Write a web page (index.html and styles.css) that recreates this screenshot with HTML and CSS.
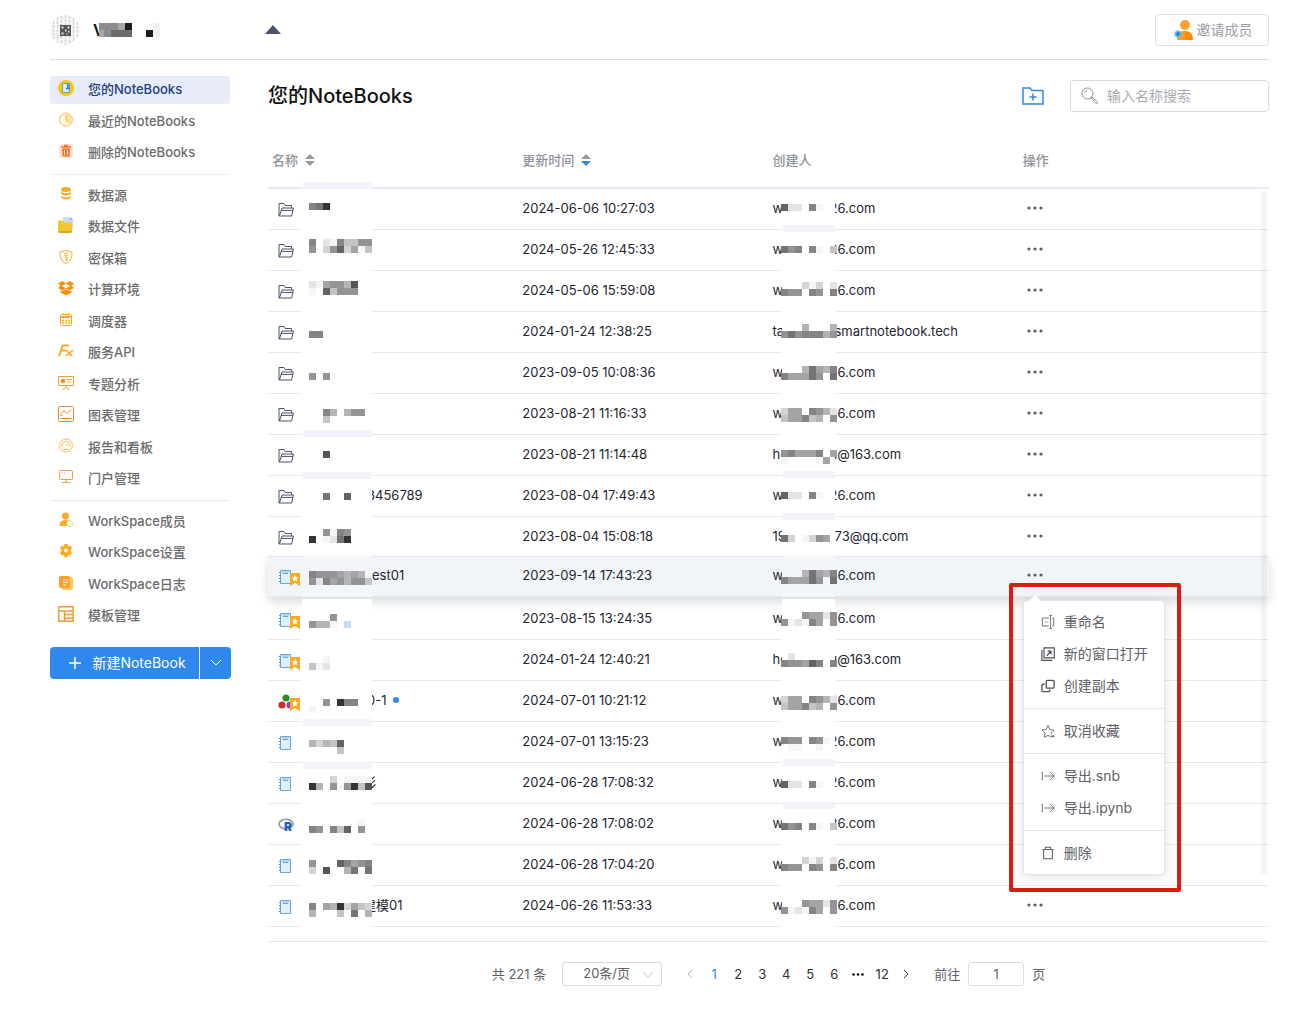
FILE: index.html
```html
<!DOCTYPE html>
<html lang="zh-CN">
<head>
<meta charset="utf-8">
<meta name="viewport" content="width=device-width, initial-scale=1">
<title>您的NoteBooks</title>
<link rel="stylesheet" href="styles.css">
</head>
<body>
<svg class="sprite" aria-hidden="true">
  <symbol id="i-folder" viewBox="0 0 16 16"><path d="M1 14V1.500h5l1.200 2h6.300v2.300M1 14h12.600l1.800-8H4L1.400 14M3 8.400h12" fill="none" stroke="#4b536a" stroke-linejoin="round"/></symbol>
  <symbol id="i-book" viewBox="0 0 16 16"><path d="M2.500 1.500h10v13h-10z" fill="#dcf0ff" stroke="#6ba6d8"/><path d="M4 2h7v2.500H4z" fill="#b3d5f3"/><path d="M5 4.500h5" stroke="#6ba6d8"/><path d="M1 3.500h2M1 6.500h2M1 9.500h2M1 12.500h2" stroke="#4f94cf"/></symbol>
  <symbol id="i-julia" viewBox="0 0 16 16"><circle cx="8" cy="4" r="3.600" fill="#2f8f22"/><circle cx="4" cy="11" r="3.600" fill="#cb3030"/><circle cx="12" cy="11" r="3.600" fill="#8a4bb5"/></symbol>
  <symbol id="i-r" viewBox="0 0 16 16"><ellipse cx="8" cy="7" rx="7" ry="4.800" fill="none" stroke="#a3a7ad" stroke-width="2"/><text x="6" y="14" font-family="Inter, sans-serif" font-weight="900" font-size="12" fill="#1e5fbf">R</text></symbol>
  <symbol id="i-mark" viewBox="0 0 10 13"><path d="M0 0h10v13l-5-3-5 3z" fill="#fbab22"/><path d="M5 2l1 2.200 2.400.2-1.800 1.600.6 2.400L5 7.200 2.800 8.400l.6-2.400L1.600 4.400 4 4.200z" fill="#fff"/></symbol>
  <symbol id="i-dots" viewBox="0 0 16 4"><circle cx="2" cy="2" r="1.600"/><circle cx="8" cy="2" r="1.600"/><circle cx="14" cy="2" r="1.600"/></symbol>
  <symbol id="i-sort" viewBox="0 0 10 12"><path d="M5 0l5 5H0z" fill="#989ba6"/><path d="M5 12L0 7h10z" fill="currentColor"/></symbol>
  <symbol id="i-export" viewBox="0 0 16 16"><path d="M1.500 3v10M3.500 8H15M10.500 3.500L15 8l-4.500 4.500" fill="none" stroke="#5d6066"/></symbol>
</svg>

<header class="topbar">
  <div class="workspace">
    <svg class="avatar" viewBox="0 0 30 30" aria-hidden="true">
      <circle cx="15" cy="15" r="15" fill="#f8f8f8"/>
      <path d="M3.500 6v18M7.500 2v26M11.500 1v28M15.500 0v30M19.500 1v28M23.500 3v24M27.500 7v16" stroke="#d6d6d6" stroke-width="1.500" stroke-dasharray="3 1"/>
      <path d="M10 10h11v11H10z" fill="#555"/>
      <path d="M11.500 11.500h2v2h-2zM17.500 11.500h2v2h-2zM11.500 17.500h2v2h-2zM15 14.500h1.500v2H15zM18 16h1.500v1.500H18zM16 18.500h1.500v1H16z" fill="#e5e5e5"/>
    </svg>
    <span class="ws-name">V</span>
    <svg class="ws-mosaic" viewBox="0 0 62 14" aria-hidden="true"><path fill="#8c8c8c" d="M0 0h26v14H0z"/><path fill="#a6a6a6" d="M19 0h7v7h-7zM0 7h5v7H0z"/><path fill="#6b6b6b" d="M12 7h21v7H12z"/><path fill="#1d1d1d" d="M26 0h7v7h-7zM47 7h7v7h-7z"/><path fill="#f1f1f1" d="M54 0h7v14h-7z"/></svg>
    <button class="ws-toggle" type="button" aria-label="切换工作空间"><svg viewBox="0 0 16 10"><path d="M8 0l8 9H0z" fill="#4a5268"/></svg></button>
  </div>
  <button class="invite" type="button">
    <svg viewBox="0 0 20 22" aria-hidden="true"><circle cx="11" cy="6" r="5" fill="#ffa033"/><path d="M3 21c0-6 3-9 8-9s8 3 8 9z" fill="#ff8a05"/><path d="M3 21c0-6 3-9 8-9v9z" fill="#ff9d2b"/><circle cx="4" cy="15" r="3.500" fill="#59bbe8"/><path d="M4 13v4M2 15h4" stroke="#1b6fa5"/></svg>邀请成员
  </button>
</header>

<div class="layout">
  <nav class="sidebar" aria-label="工作空间">
    <ul class="menu-group menu-group-3">
      <li><a class="nav-item active" href="#mine"><svg viewBox="0 0 16 16"><circle cx="8" cy="8" r="8" fill="#f8c60b"/><path d="M4.500 3.500h7v9h-7z" fill="#dff0ff" stroke="#5ba3da"/><path d="M8 8.500h4M10 4v5" stroke="#2a78bd" stroke-width="1.500"/></svg>您的NoteBooks</a></li>
      <li><a class="nav-item" href="#recent"><svg viewBox="0 0 16 16"><circle cx="8" cy="7.500" r="6.500" fill="#fff6df" stroke="#fbc04c"/><path d="M8 1a6.500 6.500 0 0 1 4 11L8 7.500z" fill="#fde3a8"/><path d="M8 3v5l3 3" fill="none" stroke="#fbb52f"/></svg>最近的NoteBooks</a></li>
      <li><a class="nav-item" href="#trash"><svg viewBox="0 0 16 16"><rect x="1" y="1" width="14" height="14" rx="2" fill="#fde3d4"/><path d="M3 4h10M6 2.500h4" stroke="#f0752b" stroke-width="1.500"/><path d="M4 5.500h8l-.5 8h-7z" fill="#f0752b"/><path d="M6.500 7v5M9.500 7v5" stroke="#fde3d4"/></svg>删除的NoteBooks</a></li>
    </ul>
    <ul class="menu-group menu-group-10">
      <li><a class="nav-item" href="#source"><svg viewBox="0 0 16 16" fill="#fbab22"><ellipse cx="8" cy="3.500" rx="5" ry="2.500"/><path d="M3 5.500c1 2.400 9 2.400 10 0v2c-1 2.600-9 2.600-10 0zM3 9.500c1 2.400 9 2.400 10 0v1.500c-1 3-9 3-10 0z"/></svg>数据源</a></li>
      <li><a class="nav-item" href="#files"><svg viewBox="0 0 16 16"><path d="M5 0h7l3 3v9H5z" fill="#c4dcfb"/><path d="M12 0v3h3z" fill="#7fb0f3"/><path d="M0 3.500h5l1.500 2H14V14a2 2 0 0 1-2 2H2a2 2 0 0 1-2-2z" fill="#efc92d"/><path d="M0 14a2 2 0 0 0 2 2h10a2 2 0 0 0 2-2z" fill="#e0a52c"/></svg>数据文件</a></li>
      <li><a class="nav-item" href="#vault"><svg viewBox="0 0 16 16" fill="none" stroke="#fbab22"><path d="M8 1c2 1.500 4 1.700 6 1.700C14 8 13.500 12 8 14.500 2.500 12 2 8 2 2.700 4 2.700 6 2.500 8 1z"/><circle cx="8" cy="5.500" r="1.500"/><path d="M8 7v5M8 9h2M8 11h2"/></svg>密保箱</a></li>
      <li><a class="nav-item" href="#env"><svg viewBox="0 0 16 16" fill="#ff8a05"><path d="M4.500 1L8 3.500 11.500 1 16 3.500l-2.500 2.300L16 8l-4.500 2.500L8 8.500l-3.500 2L0 8l2.500-2.200L0 3.500z"/><path d="M8 3.800l4.500 2.200L8 8.200 3.500 6z" fill="#fff"/><path d="M2.500 10.500l2 .8L8 9.300l3.500 2 2-.8v2L8 15.500l-5.500-3z"/></svg>计算环境</a></li>
      <li><a class="nav-item" href="#scheduler"><svg viewBox="0 0 16 16" fill="none" stroke="#fbab22"><rect x="2.500" y="2.500" width="11" height="11" rx="1"/><path d="M3 5h10" stroke-width="2"/><path d="M5 1v2M11 1v2"/><path d="M4 8.500h8M4 11h8" stroke-width="1.500" stroke-dasharray="2 1"/></svg>调度器</a></li>
      <li><a class="nav-item" href="#api"><svg viewBox="0 0 16 16" fill="none" stroke="#fbab22" stroke-width="2"><path d="M1 13.500L4.500 2.500H11M2.500 7.500h6"/><path d="M8 7.500c3 0 2 5 6.500 5M15.500 7.500c-4 0-4 5-8.500 5" stroke-width="1.500"/></svg>服务API</a></li>
      <li><a class="nav-item" href="#topics"><svg viewBox="0 0 16 16" fill="none" stroke="#ee9c3f"><path d="M.5 1.500h15v9H.5z"/><circle cx="5" cy="6" r="2" fill="#ee8a2a"/><path d="M9 4.500h5M9 7h4M8 10.500v2M4.500 14.500l3.500-2 3.500 2"/></svg>专题分析</a></li>
      <li><a class="nav-item" href="#charts"><svg viewBox="0 0 16 16" fill="none" stroke="#e58a2b"><rect x=".5" y=".5" width="15" height="15" rx="1"/><path d="M2.500 8.500l3.500-4 3 3 4-4M2.500 9.500h2M2.500 12.500h11"/></svg>图表管理</a></li>
      <li><a class="nav-item" href="#reports"><svg viewBox="0 0 16 16" fill="none" stroke="#fbbf5a"><circle cx="8" cy="7.500" r="6.500"/><path d="M4 9a4.200 4.200 0 1 1 8 0M8 8.500l2.500-3M5 11.500h6"/></svg>报告和看板</a></li>
      <li><a class="nav-item" href="#portal"><svg viewBox="0 0 16 16" fill="none" stroke="#ee9c3f"><rect x="1.500" y="1.500" width="13" height="9" rx="1"/><path d="M3.500 4h1M6 4h1M8 10.500v3M4 13.500h8"/></svg>门户管理</a></li>
    </ul>
    <ul class="menu-group menu-group-4">
      <li><a class="nav-item" href="#members"><svg viewBox="0 0 16 16"><circle cx="7.500" cy="4" r="3.500" fill="#fbab22"/><path d="M1.500 14c0-4 2-6 6-6l5 1-3 5z" fill="#fbab22"/><circle cx="11.500" cy="11.500" r="3" fill="#fff" stroke="#fbab22" stroke-dasharray="2 1"/></svg>WorkSpace成员</a></li>
      <li><a class="nav-item" href="#settings"><svg viewBox="0 0 16 16"><path d="M6.500 1h3l.6 2.300 2.300-.7 1.600 2.700L12.500 7v1l1.500 1.800-1.600 2.700-2.300-.6-.6 2.300h-3l-.6-2.300-2.300.6L2 9.800 3.500 8V7L2 5.300l1.600-2.700 2.300.7z" fill="#fbab22"/><circle cx="8" cy="7.500" r="2" fill="#fff"/></svg>WorkSpace设置</a></li>
      <li><a class="nav-item" href="#logs"><svg viewBox="0 0 16 16"><rect x="4" y="2" width="11" height="13" rx="2" fill="#fdc95f"/><rect x="1" y="1" width="11" height="12" rx="2" fill="#fb9f27"/><path d="M5 5h6M5 7.500h5M5 10h3" stroke="#fff"/></svg>WorkSpace日志</a></li>
      <li><a class="nav-item" href="#templates"><svg viewBox="0 0 16 16" fill="none" stroke="#f09b39" stroke-width="1.500"><path d="M.8.8h14.400v14.400H.8zM1 5h14M6.500 5v10M6.500 8.500H15M6.500 12H15"/></svg>模板管理</a></li>
    </ul>
    <div class="create">
      <button class="create-main" type="button"><svg viewBox="0 0 12 12" aria-hidden="true"><path d="M6 0v12M0 6h12" stroke="#fff" stroke-width="1.500"/></svg>新建NoteBook</button>
      <button class="create-more" type="button" aria-label="更多"><svg viewBox="0 0 10 6"><path d="M0 0l5 5 5-5" fill="none" stroke="#fff"/></svg></button>
    </div>
  </nav>

  <main class="content">
    <div class="title-row">
      <h1>您的NoteBooks</h1>
      <button class="new-folder" type="button" aria-label="新建文件夹"><svg viewBox="0 0 22 18"><path d="M1 17V1h7l2 2.500h11V17zM11 6.500v7M7.500 10h7" fill="none" stroke="#2d87ee" stroke-width="1.500"/></svg></button>
      <label class="search">
        <svg viewBox="0 0 18 18" aria-hidden="true" fill="none" stroke="#8f9399"><circle cx="6.500" cy="6.500" r="5.500"/><path d="M3.500 6a3 3 0 0 1 2.500-2.500M10 11l1-1 6 5.500-1.500 1.500z"/></svg>
        <input type="search" placeholder="输入名称搜索" aria-label="输入名称搜索">
      </label>
    </div>

    <div class="table-wrap">
      <table class="files">
        <thead>
          <tr>
            <th scope="col"><button type="button">名称<svg class="sort"><use href="#i-sort"/></svg></button></th>
            <th scope="col"><button type="button">更新时间<svg class="sort desc"><use href="#i-sort"/></svg></button></th>
            <th scope="col">创建人</th>
            <th scope="col">操作</th>
          </tr>
        </thead>
        <tbody id="rows"></tbody>
      </table>
      <div class="scrollbar"></div>
      <div class="callout">
        <div class="dropdown" role="menu">
          <button role="menuitem" type="button"><svg viewBox="0 0 16 16" fill="none" stroke="#5d6066"><path d="M9 3.500H1.500v9H9M13 3.500h1.500v9H13M11 1v14M9.500.5h3M9.500 15.500h3"/><path d="M4 8h4" stroke="#a8abb0"/></svg>重命名</button>
          <button role="menuitem" type="button"><svg viewBox="0 0 16 16" fill="none" stroke="#4c4f55" stroke-width="1.300"><path d="M3.500 1h11.700v11.500H3.500zM1 3v12.300h12M6.500 10l4.500-4.500"/><path d="M7 4h5v5z" fill="#4c4f55" stroke="none"/></svg>新的窗口打开</button>
          <button role="menuitem" type="button"><svg viewBox="0 0 16 16" fill="none" stroke="#4c4f55" stroke-width="1.500"><rect x="6" y="1.500" width="9" height="9" rx="1.500"/><path d="M4 6H2.500A1.500 1.500 0 0 0 1 7.500V13a1.500 1.500 0 0 0 1.500 1.500h6A1.500 1.500 0 0 0 10 13v-1"/></svg>创建副本</button>
          <hr>
          <button role="menuitem" type="button"><svg viewBox="0 0 16 16" fill="none" stroke="#5d6066"><path d="M12 15l-4-2-4.200 2.200.8-4.700L1 7l4.800-.7L8 1.500l2.200 4.800L15 7l-3.500 3.500.2 1.500"/><path d="M12 13h3v2h-3z" fill="#5d6066" stroke="none"/></svg>取消收藏</button>
          <hr>
          <button role="menuitem" type="button"><svg><use href="#i-export"/></svg>导出.snb</button>
          <button role="menuitem" type="button"><svg><use href="#i-export"/></svg>导出.ipynb</button>
          <hr>
          <button role="menuitem" type="button"><svg viewBox="0 0 16 16" fill="none" stroke="#5d6066" stroke-width="1.200"><path d="M1.500 4h13M5 4V1.500h6V4M3 4v10.500h10V4"/></svg>删除</button>
        </div>
      </div>
    </div>

    <nav class="pager" aria-label="分页">
      <span class="total">共 221 条</span>
      <span class="size"><select aria-label="每页条数"><option>20条/页</option></select><svg viewBox="0 0 10 6" aria-hidden="true"><path d="M0 0l5 5 5-5" fill="none" stroke="#c0c4cc"/></svg></span>
      <div class="pages">
        <button type="button" aria-label="上一页"><svg viewBox="0 0 6 10"><path d="M5 1L1 5l4 4" fill="none" stroke="#b4b8c0"/></svg></button>
        <button class="current" type="button">1</button><button type="button">2</button><button type="button">3</button><button type="button">4</button><button type="button">5</button><button type="button">6</button>
        <button type="button" aria-label="更多页"><svg class="more-pages"><use href="#i-dots"/></svg></button>
        <button type="button">12</button>
        <button type="button" aria-label="下一页"><svg viewBox="0 0 6 10"><path d="M1 1l4 4-4 4" fill="none" stroke="#303133"/></svg></button>
      </div>
      <label class="jump">前往<input type="text" value="1">页</label>
    </nav>
  </main>
</div>
<script src="rows.js"></script>
</body>
</html>
```
FILE: styles.css
```css
* { box-sizing: border-box; }

body {
  margin: 0;
  padding: 0 47px 40px 50px;
  background: #fff;
  color: #23262f;
  font: 13px/20px Inter, "Noto Sans CJK SC", sans-serif;
}

button, input, select { font: inherit; color: inherit; }
button { padding: 0; border: 0; background: none; cursor: pointer; }
svg { flex: none; display: block; }
.sprite { display: none; }

/* top bar */
.topbar {
  display: flex;
  align-items: center;
  justify-content: space-between;
  height: 60px;
  border-bottom: 1px solid #dfe0e4;
}
.workspace { display: flex; align-items: center; }
.avatar { width: 30px; height: 30px; margin-right: 13px; border-radius: 50%; }
.ws-name { width: 6px; font-size: 16px; font-weight: 600; color: #111; }
.ws-mosaic { position: relative; width: 62px; height: 14px; }
.ws-toggle { margin-left: 104px; }
.ws-toggle svg { width: 16px; height: 10px; }
.invite {
  display: flex;
  align-items: center;
  justify-content: center;
  gap: 3px;
  width: 114px;
  height: 32px;
  padding-left: 2px;
  border: 1px solid #dcdde8;
  border-radius: 4px;
  font-size: 14px;
  color: #9a9da3;
}
.invite svg { width: 20px; height: 22px; }

.layout { display: flex; gap: 38px; }

/* sidebar */
.sidebar { flex: none; width: 180px; padding-top: 16px; }
.menu-group {
  display: grid;
  align-content: space-between;
  margin: 0;
  padding: 0;
  list-style: none;
}
.menu-group-3 { height: 91px; }
.menu-group-10 { height: 311px; }
.menu-group-4 { height: 122px; }
.menu-group + .menu-group {
  box-sizing: content-box;
  margin-top: 7px;
  padding-top: 7px;
  border-top: 1px solid #ececef;
}
.menu-group-4 { margin-bottom: 17px; }
.nav-item {
  display: flex;
  align-items: center;
  gap: 14px;
  height: 28px;
  padding: 0 0 2px 8px;
  border-radius: 4px;
  color: #6b6b6b;
  font-weight: 500;
  text-decoration: none;
}
.nav-item svg { width: 16px; height: 16px; margin-bottom: 2px; }
.nav-item.active { background: #e8ecfa; color: #20407f; }
.create { display: flex; gap: 1px; width: 181px; height: 32px; }
.create button {
  display: flex;
  align-items: center;
  justify-content: center;
  background: #2f88ee;
  color: #fff;
  font-size: 14px;
}
.create-main { flex: 1; gap: 11px; border-radius: 4px 0 0 4px; padding-left: 6px; }
.create-main svg { width: 12px; height: 12px; }
.create .create-more { width: 31px; border-radius: 0 4px 4px 0; }
.create-more svg { width: 10px; height: 6px; }

/* page title */
.content { flex: 1; min-width: 0; padding-top: 20px; }
.title-row { display: flex; align-items: center; height: 32px; margin-bottom: 20px; }
h1 { flex: 1; margin: 0; font-size: 20px; line-height: 32px; font-weight: 500; color: #111; }
.new-folder { margin-right: 26px; }
.new-folder svg { width: 22px; height: 18px; }
.search {
  display: flex;
  align-items: center;
  gap: 8px;
  width: 199px;
  height: 32px;
  padding: 0 10px;
  border: 1px solid #d6d8e4;
  border-radius: 4px;
}
.search svg { width: 18px; height: 18px; }
.search input {
  flex: 1;
  min-width: 0;
  padding: 0;
  border: 0;
  outline: 0;
  background: none;
  font-size: 14px;
}
.search input::placeholder { color: #a8abb2; opacity: 1; }

/* file table */
.table-wrap { position: relative; padding-bottom: 14px; border-bottom: 1px solid #e4e6ec; }
.files { width: 100%; table-layout: fixed; border-collapse: separate; border-spacing: 0; }
th {
  height: 57px;
  padding: 0 4px;
  border-bottom: 2px solid #e6e9f3;
  text-align: left;
  font-weight: 500;
  color: #909399;
}
th button { display: flex; align-items: center; gap: 7px; }
.sort { width: 10px; height: 12px; color: #989ba6; }
.sort.desc { color: #2f88ee; }
td {
  height: 41px;
  padding: 0 4px;
  box-shadow: inset 0 -1px #e6e8f2;
  line-height: 38px;
  vertical-align: top;
  white-space: nowrap;
}
.name-cell, .owner-cell { display: flex; align-items: flex-start; height: 41px; }
.name-cell { padding-left: 6px; }
.icon { position: relative; flex: none; width: 16px; height: 16px; margin: 13px 8px 0 0; }
.icon svg { width: 16px; height: 16px; }
.icon .mark { position: absolute; left: 12px; top: 4px; width: 10px; height: 13px; }
.redact { position: relative; height: 41px; background: #fff; overflow: visible; }
.name-cell .redact { width: 70px; }
.owner-cell .redact { width: 53px; }
.tail-cut { margin-left: -5px; }
.tail-half { margin-left: -9px; }
.lead { flex: none; width: 9px; }
.unsaved { width: 6px; height: 6px; margin: 16px 0 0 7px; border-radius: 50%; background: #2f88ee; }
.more { display: flex; align-items: center; height: 38px; margin-left: 4px; }
.more svg { width: 16px; height: 4px; fill: #5a5d63; }
.raised { position: relative; transform: translateY(-2px); box-shadow: 0 5px 10px rgba(0, 0, 0, .14); }
.raised td { background: #f1f5f8; box-shadow: inset 0 1px #e4e8ef, inset 0 -1px #e4e8f2; }
.raised .redact { background: #f3f6f9; }
.scrollbar {
  position: absolute;
  top: 59px;
  right: 2px;
  width: 6px;
  height: 683px;
  border-radius: 3px;
  background: rgba(144, 147, 170, .1);
}

/* row menu with its highlight frame */
.callout {
  position: absolute;
  top: 451px;
  left: calc(75% - 10px);
  padding: 13px 12px 13px 10px;
  border: 4px solid #dc1c10;
  border-radius: 2px;
}
.dropdown {
  position: relative;
  width: 142px;
  padding: 5px 0;
  border: 1px solid #e2e5ef;
  border-radius: 4px;
  background: #fff;
  box-shadow: 0 2px 12px rgba(0, 0, 0, .12);
}
.dropdown::before {
  content: "";
  position: absolute;
  top: -6px;
  left: 5px;
  border: 6px solid transparent;
  border-top: 0;
  border-bottom-color: #fff;
}
.dropdown button {
  display: flex;
  align-items: center;
  gap: 8px;
  width: 100%;
  height: 32px;
  padding-left: 16px;
  font-size: 14px;
  color: #5d6066;
}
.dropdown svg { width: 16px; height: 16px; padding: 1px; }
.dropdown hr { height: 1px; margin: 6px 0; border: 0; background: #e6e8f2; }

/* pagination */
.pager {
  display: flex;
  align-items: center;
  justify-content: center;
  gap: 16px;
  margin-top: 20px;
  color: #606266;
  line-height: 24px;
}
.size { position: relative; }
.size select {
  display: block;
  width: 100px;
  height: 24px;
  padding: 0 20px 2px;
  border: 1px solid #d9dbe6;
  border-radius: 3px;
  background: #fff;
  line-height: 20px;
  appearance: none;
}
.size svg { position: absolute; top: 10px; right: 9px; width: 10px; height: 6px; }
.pages { display: flex; color: #303133; }
.pages button { display: flex; align-items: center; justify-content: center; width: 24px; height: 24px; }
.pages svg { width: 6px; height: 10px; }
.pages .more-pages { width: 12px; height: 3px; }
.pages .current { color: #2f88ee; }
.jump { display: flex; gap: 8px; }
.jump input {
  width: 56px;
  height: 24px;
  padding: 0;
  border: 1px solid #d9dbe6;
  border-radius: 3px;
  text-align: center;
}
```
FILE: rows.js
```
// Each blurred block: top offset, one string of grey levels per line, optional band offset.
const W1 = [15, '6ee.8f..'], W2 = [16, '798.8f.c'];
const W3 = ['...dfd.e', '899.89.8'], W4 = ['...b7ab8', '8aaa79.7'];
const W5 = ['daa.89be', 'caa8cb.9'], W6 = ['...9aae9', '9fef8a.9'];

const rows = [
  { icon: 'folder', name: [14, ['873'], -7], date: '2024-06-06 10:27:03', lead: 'w', owner: [15, [W1[1]]], end: '26.com' },
  { icon: 'folder', name: [9, ['8.ef8cc99', '9.d96dafc']], date: '2024-05-26 12:45:33', lead: 'w', owner: [16, [W2[1]], -5], end: '26.com' },
  { icon: 'folder', name: [10, ['efa99b5', 'f.6c999']], date: '2024-05-06 15:59:08', lead: 'w', owner: [11, W3], end: '26.com' },
  { icon: 'folder', name: [19, ['88']], date: '2024-01-24 12:38:25', lead: 'ta', owner: [12, ['...b...b', '979888b9']], end: 'smartnotebook.tech', endClass: '' },
  { icon: 'folder', name: [20, ['9.9']], date: '2023-09-05 10:08:36', lead: 'w', owner: [13, W4], end: '26.com' },
  { icon: 'folder', name: [15, ['..8b.b99', '..c']], date: '2023-08-21 11:16:33', lead: 'w', owner: [14, W5], end: '26.com' },
  { icon: 'folder', name: [16, ['..5'], -5], date: '2023-08-21 11:14:48', lead: 'he', owner: [15, ['98aaa8.a', 'f....fa.']], end: 'u@163.com' },
  { icon: 'folder', name: [17, ['..7..6'], -4], tail: '3456789', date: '2023-08-04 17:49:43', lead: 'w', owner: [16, [W1[1]], -5], end: '26.com' },
  { icon: 'folder', name: [12, ['..9f89', '3.fe73']], date: '2023-08-04 15:08:18', lead: '19', owner: [18, ['7d.fd9a.'], -4], end: '73@qq.com', endClass: '' },
  { icon: 'book', star: true, raised: true, name: [15, ['8999abab', '9e8a9b99c']], tail: 'est01', tailClass: '', date: '2023-09-14 17:43:23', lead: 'w', owner: [14, W4], end: '26.com' },
  { icon: 'book', star: true, name: [15, ['...9', '9bbf.L']], date: '2023-08-15 13:24:35', lead: 'w', owner: [13, W6], end: '26.com' },
  { icon: 'book', star: true, name: [16, ['..f', 'cfe']], date: '2024-01-24 12:40:21', lead: 'he', owner: [13, ['.e......', '899a68.8']], end: 'u@163.com' },
  { icon: 'julia', star: true, name: [18, ['..9.388', 'f']], tail: '0-1', dot: true, date: '2024-07-01 10:21:12', lead: 'w', owner: [15, W5], end: '26.com' },
  { icon: 'book', name: [18, ['bdbc6', '....c'], -3], date: '2024-07-01 13:15:23', lead: 'w', owner: [15, ['899.89f.', '.ff..f..']], end: '26.com' },
  { icon: 'book', name: [13, ['...d.ffff', '3b.9f93c5'], -1], tail: '彩', tailClass: 'tail-half', date: '2024-06-28 17:08:32', lead: 'w', owner: [18, [W1[1]], -4], end: '26.com' },
  { icon: 'r', name: [15, ['.......f', '89.8c6.9']], date: '2024-06-28 17:08:02', lead: 'w', owner: [19, [W2[1]], -2], end: '26.com' },
  { icon: 'book', name: [15, ['9...68a98', 'd.5..b7.7']], date: '2024-06-28 17:04:20', lead: 'w', owner: [12, W3], end: '26.com' },
  { icon: 'book', name: [17, ['8.ab3dacd', 'b...c.7.b']], tail: '建模01', tailClass: 'tail-half', date: '2024-06-26 11:53:33', lead: 'w', owner: [14, W6], end: '26.com' },
];

const shade = c => c === 'L' ? '#c5dcf9' : c === 'f' ? '#f5f5f6' : `#${c}4${c}4${c}7`;

function block([top, lines, band], left, width) {
  let out = '';
  if (band !== undefined) out += `<rect x="1" y="${band}" width="${width - 1}" height="7" fill="#f3f4f9"/>`;
  lines.forEach((line, r) => [...line].forEach((c, k) => {
    if (c === '.') return;
    out += `<rect x="${left + k * 7}" y="${top + r * 7}" width="7" height="7" fill="${shade(c)}"/>`;
  }));
  return `<svg class="redact" aria-hidden="true">${out}</svg>`;
}

document.getElementById('rows').innerHTML = rows.map(r => `
  <tr${r.raised ? ' class="raised"' : ''}>
    <td><div class="name-cell">
      <span class="icon"><svg><use href="#i-${r.icon}"/></svg>${r.star ? '<svg class="mark"><use href="#i-mark"/></svg>' : ''}</span>
      ${block(r.name, 7, 70)}
      ${r.tail ? `<span class="${r.tailClass ?? 'tail-cut'}">${r.tail}</span>` : ''}
      ${r.dot ? '<span class="unsaved"></span>' : ''}
    </div></td>
    <td>${r.date}</td>
    <td><div class="owner-cell"><span class="lead">${r.lead}</span>${block(r.owner, -1, 53)}<span class="${r.endClass ?? 'tail-cut'}">${r.end}</span></div></td>
    <td><button class="more" type="button" aria-label="更多操作"><svg><use href="#i-dots"/></svg></button></td>
  </tr>`).join('');
```
